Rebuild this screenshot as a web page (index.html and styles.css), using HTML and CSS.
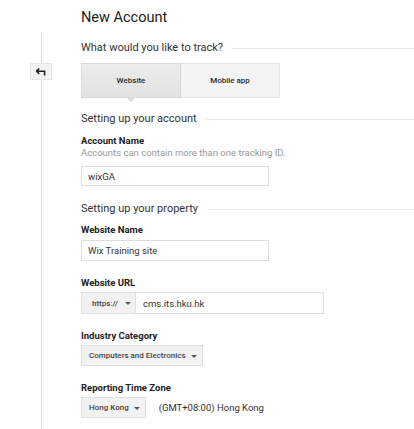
FILE: index.html
```html
<!DOCTYPE html>
<html lang="en">
<head>
<meta charset="utf-8">
<title>New Account</title>
<link rel="stylesheet" href="styles.css">
</head>
<body>
<div class="page">
  <aside class="rail">
    <button class="back" type="button" aria-label="Back">
      <svg width="10" height="8" viewBox="0 0 10 8"><path d="M3.2 0.5 L0.5 3.2 L3.2 5.9 M0.8 3.2 H8.6 V7.5" fill="none" stroke="#222" stroke-width="1.6"/></svg>
    </button>
  </aside>
  <main class="main">
    <h1 class="title">New Account</h1>

    <div class="section-head sh-track"><span>What would you like to track?</span></div>
    <div class="toggle">
      <div class="seg seg-on">Website</div>
      <div class="seg">Mobile app</div>
    </div>

    <div class="section-head sh-account"><span>Setting up your account</span></div>
    <div class="label lbl-account">Account Name</div>
    <div class="hint">Accounts can contain more than one tracking ID.</div>
    <div class="input input-account">wixGA</div>

    <div class="section-head sh-property"><span>Setting up your property</span></div>
    <div class="label lbl-first">Website Name</div>
    <div class="input">Wix Training site</div>

    <div class="label lbl-next">Website URL</div>
    <div class="url-row">
      <div class="drop drop-proto">https://<i class="caret"></i></div>
      <div class="input input-url">cms.its.hku.hk</div>
    </div>

    <div class="label lbl-next">Industry Category</div>
    <div class="drop">Computers and Electronics<i class="caret"></i></div>

    <div class="label lbl-next">Reporting Time Zone</div>
    <div class="tz-row">
      <div class="drop">Hong Kong<i class="caret"></i></div>
      <span class="tz-text">(GMT+08:00) Hong Kong</span>
    </div>
  </main>
</div>
</body>
</html>
```
FILE: styles.css
```css
html, body {
  margin: 0;
  padding: 0;
  background: #fff;
}
body {
  font-family: Roboto, "Liberation Sans", Arial, sans-serif;
  color: #222;
  overflow: hidden;
}
.page {
  display: flex;
  min-height: 429px;
}
.rail {
  width: 81px;
  flex: none;
  position: relative;
  padding-top: 63px;
  box-sizing: border-box;
}
.rail::before {
  content: "";
  position: absolute;
  left: 41px;
  top: 32px;
  bottom: 0;
  width: 1px;
  background: #dcdcdc;
}
.back {
  position: relative;
  margin-left: 30px;
  width: 22px;
  height: 17px;
  padding: 0;
  border: 1px solid #e6e6e6;
  background: #f3f3f3;
  display: flex;
  align-items: center;
  justify-content: center;
}
.main {
  flex: 1;
  padding-top: 8px;
  min-width: 0;
}
.title {
  margin: 0;
  font-size: 14.5px;
  line-height: 20px;
  font-weight: 400;
  color: #212121;
}
.section-head {
  display: flex;
  align-items: center;
  gap: 9px;
  font-size: 11px;
  line-height: 14px;
  color: #333;
}
.section-head::after {
  content: "";
  flex: 1;
  height: 1px;
  background: #e8e8e8;
}
.sh-track {
  margin-top: 13px;
}
.sh-account {
  margin-top: 14px;
}
.sh-property {
  margin-top: 16px;
}
.toggle {
  display: flex;
  margin-top: 8px;
  width: 199px;
  height: 35px;
}
.seg {
  flex: 1;
  display: flex;
  align-items: center;
  justify-content: center;
  font-size: 8px;
  font-weight: 500;
  color: #2a2a2a;
  background: #f4f4f4;
  border: 1px solid #e3e3e3;
  border-left: none;
}
.seg-on {
  background: linear-gradient(#ececec, #e2e2e2);
  border: 1px solid #d9d9d9;
  position: relative;
}
.seg-on::after {
  content: "";
  position: absolute;
  left: 50%;
  bottom: -5px;
  margin-left: -5px;
  border-left: 5px solid transparent;
  border-right: 5px solid transparent;
  border-top: 5px solid #dcdcdc;
}
.label {
  font-size: 9.5px;
  line-height: 12px;
  font-weight: 700;
  color: #222;
}
.lbl-account {
  margin-top: 9px;
}
.lbl-first {
  margin-top: 8px;
}
.lbl-next {
  margin-top: 16px;
}
.hint {
  font-size: 9.5px;
  line-height: 12px;
  color: #9a9a9a;
}
.input {
  margin-top: 4px;
  width: 188px;
  height: 21px;
  box-sizing: border-box;
  border: 1px solid #dedede;
  padding: 0 6px;
  display: flex;
  align-items: center;
  font-size: 9.5px;
  color: #333;
}
.input-account {
  margin-top: 7px;
  height: 20px;
}
.url-row {
  display: flex;
  margin-top: 3px;
  height: 22px;
}
.url-row .input {
  margin-top: 0;
  height: 22px;
}
.input-url {
  width: 188px;
  padding-left: 7px;
  border-left: none;
}
.drop {
  display: inline-flex;
  align-items: center;
  gap: 5px;
  height: 21px;
  box-sizing: border-box;
  padding: 0 5px 0 7px;
  margin-top: 3px;
  background: #f2f2f2;
  border: 1px solid #e0e0e0;
  font-size: 8px;
  font-weight: 500;
  color: #444;
}
.drop-proto {
  width: 55px;
  height: 22px;
  margin-top: 0;
  padding-left: 10px;
  gap: 7px;
  flex: none;
}
.caret {
  width: 0;
  height: 0;
  border-left: 3px solid transparent;
  border-right: 3px solid transparent;
  border-top: 3px solid #555;
  margin-top: 1px;
}
.tz-row {
  display: flex;
  align-items: center;
  gap: 13px;
}
.tz-text {
  margin-top: 3px;
  font-size: 9.5px;
  color: #333;
}
```
